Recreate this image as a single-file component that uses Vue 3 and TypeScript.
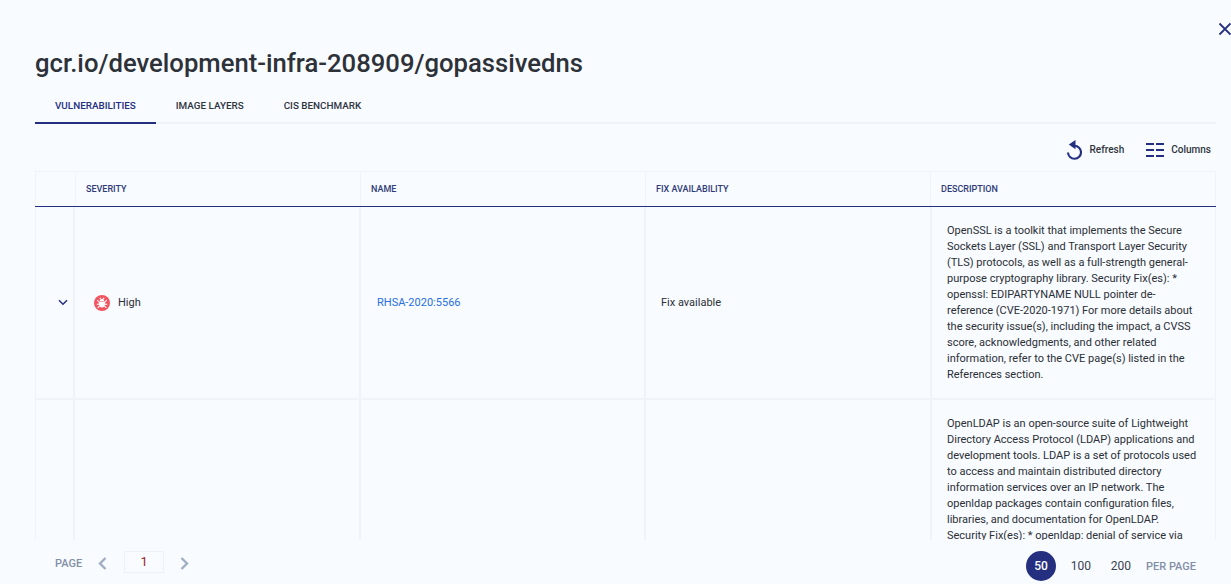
<script setup lang="ts">
interface Row {
  severity: string
  name: string
  fix: string
  description: string
}

const tabs: string[] = ['VULNERABILITIES', 'IMAGE LAYERS', 'CIS BENCHMARK']
const columns: string[] = ['SEVERITY', 'NAME', 'FIX AVAILABILITY', 'DESCRIPTION']
const rows: Row[] = [
  {
    severity: 'High',
    name: 'RHSA-2020:5566',
    fix: 'Fix available',
    description:
      'OpenSSL is a toolkit that implements the Secure Sockets Layer (SSL) and Transport Layer Security (TLS) protocols, as well as a full-strength general-purpose cryptography library. Security Fix(es): * openssl: EDIPARTYNAME NULL pointer de-reference (CVE-2020-1971) For more details about the security issue(s), including the impact, a CVSS score, acknowledgments, and other related information, refer to the CVE page(s) listed in the References section.'
  },
  {
    severity: '',
    name: '',
    fix: '',
    description:
      'OpenLDAP is an open-source suite of Lightweight Directory Access Protocol (LDAP) applications and development tools. LDAP is a set of protocols used to access and maintain distributed directory information services over an IP network. The openldap packages contain configuration files, libraries, and documentation for OpenLDAP. Security Fix(es): * openldap: denial of service via'
  }
]
</script>

<template>
  <div class="page">
    <button class="close" aria-label="Close">
      <svg width="14" height="14" viewBox="0 0 14 14"><path d="M1.5 1.5l11 11M12.5 1.5l-11 11" stroke="#252f80" stroke-width="1.8" fill="none" /></svg>
    </button>
    <h1 class="title">gcr.io/development-infra-208909/gopassivedns</h1>
    <nav class="tabs">
      <span v-for="(t, i) in tabs" :key="t" class="tab" :class="{ active: i === 0 }">{{ t }}</span>
    </nav>
    <div class="tools">
      <span class="tool refresh">
        <svg width="16" height="20" viewBox="0 0 16 20">
          <path d="M8.5 5.8a6.5 6.5 0 1 1-6.5 6.7" fill="none" stroke="#252f80" stroke-width="2.1" />
          <path d="M9.5 0L2.8 4.6l6.7 4.6z" fill="#252f80" />
        </svg>
        Refresh
      </span>
      <span class="tool">
        <svg width="18" height="14" viewBox="0 0 18 14" fill="#252f80">
          <rect x="0" y="0" width="8" height="2" /><rect x="10" y="0" width="8" height="2" />
          <rect x="0" y="6" width="8" height="2" /><rect x="10" y="6" width="8" height="2" />
          <rect x="0" y="12" width="8" height="2" /><rect x="10" y="12" width="8" height="2" />
        </svg>
        Columns
      </span>
    </div>
    <div class="table">
      <div class="head">
        <div class="hcell"></div>
        <div v-for="c in columns" :key="c" class="hcell">{{ c }}</div>
      </div>
      <div class="scroll">
        <div v-for="(r, i) in rows" :key="i" class="row">
          <div class="cell narrow">
            <svg v-if="r.severity" width="10" height="7" viewBox="0 0 10 7"><path d="M1 1.2l4 4 4-4" fill="none" stroke="#252f80" stroke-width="1.5" /></svg>
          </div>
          <div class="cell sev">
            <template v-if="r.severity">
              <svg class="bug" width="16" height="16" viewBox="0 0 16 16">
                <circle cx="8" cy="8" r="8" fill="#f25560" />
                <path d="M4.8 8.2c0-1 .8-1.6 1.6-1.6h3.2c.8 0 1.6.6 1.6 1.6 0 2.4-1.4 4.2-3.2 4.2S4.8 10.6 4.8 8.2z" fill="#fff" />
                <path d="M5.8 6a2.2 2.2 0 0 1 4.4 0z" fill="#fff" />
                <path d="M3.2 5.2l2.4 2.2M12.8 5.2l-2.4 2.2M2.8 9.2h2.6M13.2 9.2h-2.6M3.6 12.8l2.2-2M12.4 12.8l-2.2-2M5.8 2.8l1 1.2M10.2 2.8l-1 1.2" stroke="#fff" stroke-width="1.1" fill="none" />
              </svg>
              <span>{{ r.severity }}</span>
            </template>
          </div>
          <div class="cell namec"><a v-if="r.name" class="link">{{ r.name }}</a></div>
          <div class="cell">{{ r.fix }}</div>
          <div class="cell desc">{{ r.description }}</div>
        </div>
      </div>
    </div>
    <footer class="foot">
      <div class="pager">
        <span class="muted">PAGE</span>
        <svg width="9" height="13" viewBox="0 0 9 13"><path d="M7.5 1L2 6.5l5.5 5.5" fill="none" stroke="#a0aec4" stroke-width="2.4" /></svg>
        <span class="num">1</span>
        <svg width="9" height="13" viewBox="0 0 9 13"><path d="M1.5 1L7 6.5 1.5 12" fill="none" stroke="#a0aec4" stroke-width="2.4" /></svg>
      </div>
      <div class="sizes">
        <span class="size current">50</span>
        <span class="size">100</span>
        <span class="size">200</span>
        <span class="muted">PER PAGE</span>
      </div>
    </footer>
  </div>
</template>

<style>
html, body { margin: 0; background: #f8fbff; }
</style>

<style scoped>
.page {
  position: relative;
  height: 584px;
  box-sizing: border-box;
  padding: 0 15px 0 35px;
  display: flex;
  flex-direction: column;
  overflow: hidden;
  background: #f8fbff;
  font-family: Roboto, "Liberation Sans", sans-serif;
  color: #2b2f36;
}
.close {
  position: absolute;
  top: 22px;
  right: -1px;
  padding: 0;
  border: 0;
  background: none;
  line-height: 0;
}
.title {
  margin: 47px 0 0;
  font-size: 25.67px;
  line-height: 32px;
  font-weight: 500;
  color: #2d3138;
}
.tabs {
  margin-top: 11px;
  height: 32px;
  flex: none;
  display: flex;
  border-bottom: 2px solid #f0f3f8;
}
.tab {
  height: 34px;
  box-sizing: border-box;
  padding: 6px 20px 0;
  font-size: 9.87px;
  font-weight: 500;
  line-height: 20px;
  color: #2f3540;
  border-bottom: 2px solid transparent;
}
.tab.active { color: #252f80; border-color: #252f80; }
.tools {
  height: 47px;
  flex: none;
  box-sizing: border-box;
  padding: 4px 5px 0 0;
  display: flex;
  justify-content: flex-end;
  align-items: center;
  gap: 22px;
}
.tool {
  display: flex;
  align-items: center;
  gap: 7px;
  font-size: 10px;
  font-weight: 500;
  color: #2f3540;
}
.tool.refresh { gap: 8px; }
.table {
  flex: 1;
  min-height: 0;
  display: flex;
  flex-direction: column;
}
.head {
  display: grid;
  grid-template-columns: 40px 285px 285px 285px 286px;
  height: 36px;
  flex: none;
  box-sizing: border-box;
  border-top: 1px solid #f0f3f8;
  border-bottom: 1px solid #252f80;
  font-size: 9px;
  font-weight: 500;
  color: #2f3a78;
}
.hcell {
  box-sizing: border-box;
  border-left: 1px solid #f0f3f8;
  padding-left: 10px;
  display: flex;
  align-items: center;
}
.hcell:last-child { border-right: 1px solid #f0f3f8; }
.scroll {
  flex: 1;
  min-height: 0;
  overflow: hidden;
}
.row {
  display: grid;
  grid-template-columns: 40px 286px 285px 286px 284px;
  border-bottom: 2px solid #f0f3f8;
  font-size: 11px;
  line-height: 16px;
}
.cell {
  box-sizing: border-box;
  padding-left: 15px;
  display: flex;
  align-items: center;
  border-right: 2px solid #f0f3f8;
}
.narrow {
  padding: 0 0 0 22px;
  border-left: 1px solid #f0f3f8;
}
.sev { gap: 8px; padding-left: 19px; }
.namec { padding-left: 16px; }
.link { color: #2a6fe0; }
.desc {
  padding: 16px 14px 15px 15px;
  display: block;
  border-right: 1px solid #f0f3f8;
}
.foot {
  height: 44px;
  flex: none;
  display: flex;
  justify-content: space-between;
  padding: 0 20px;
}
.pager, .sizes { display: flex; align-items: center; }
.pager { padding-top: 2px; }
.sizes { padding-top: 8px; }
.muted { font-size: 11px; font-weight: 500; color: #838ea7; }
.pager svg { margin-left: 16px; }
.num {
  width: 40px;
  height: 22px;
  margin: -2px 0 0 17px;
  box-sizing: border-box;
  border: 1px solid #eef1f6;
  color: #9b2226;
  font-size: 13px;
  line-height: 20px;
  text-align: center;
}
.size {
  width: 30px;
  height: 30px;
  margin-right: 10px;
  border-radius: 50%;
  display: flex;
  align-items: center;
  justify-content: center;
  font-size: 12px;
  color: #3a4250;
}
.size.current { background: #252f80; color: #fff; font-weight: 500; }
</style>
